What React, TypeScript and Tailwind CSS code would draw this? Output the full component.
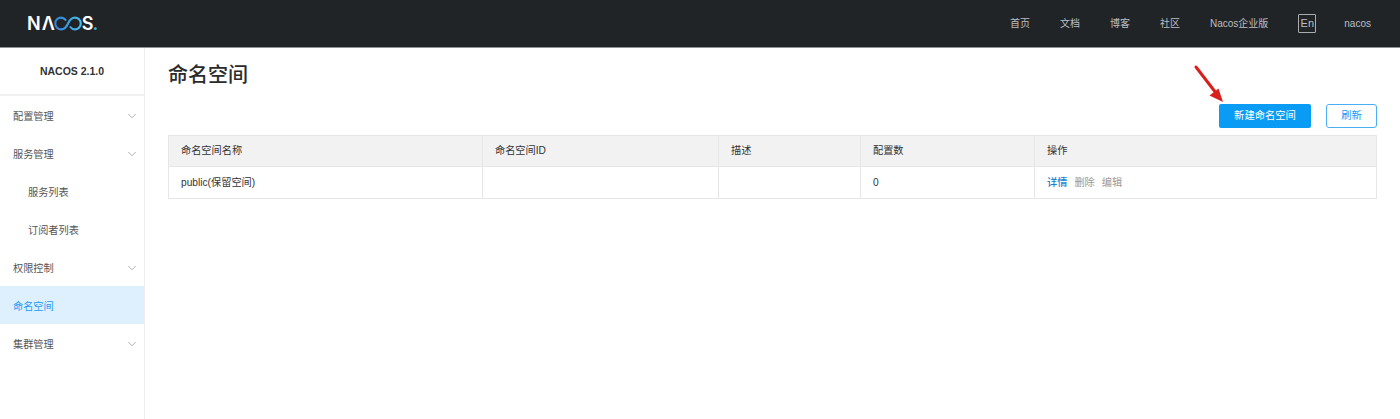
import { ChevronDown } from "lucide-react";

const menu = [
  { label: "配置管理", arrow: true },
  { label: "服务管理", arrow: true },
  { label: "服务列表", sub: true },
  { label: "订阅者列表", sub: true },
  { label: "权限控制", arrow: true },
  { label: "命名空间", active: true },
  { label: "集群管理", arrow: true },
];

function Logo() {
  return (
    <div
      className="flex items-center text-[18px] font-semibold leading-none text-white"
      style={{ fontFamily: "Inter, sans-serif" }}
    >
      <span>N</span>
      <span className="ml-[1px]">Λ</span>
      <svg width="28" height="15" viewBox="0 0 29 15" fill="none" className="-ml-[1px]">
        <defs>
          <linearGradient id="loop" x1="0" y1="0" x2="29" y2="0" gradientUnits="userSpaceOnUse">
            <stop offset="0" stopColor="#2f7fd8" />
            <stop offset="1" stopColor="#47c1e8" />
          </linearGradient>
        </defs>
        <path
          d="M12 3.8C10.8 2.4 9.2 1.4 7.4 1.4 4 1.4 1.3 4.1 1.3 7.5S4 13.6 7.4 13.6C11.4 13.6 13.4 10 14.5 7.5 15.6 5 17.6 1.4 21.6 1.4 25 1.4 27.7 4.1 27.7 7.5S25 13.6 21.6 13.6C19.8 13.6 18.2 12.6 17 11.2"
          stroke="url(#loop)"
          strokeWidth="2.2"
          strokeLinecap="round"
        />
      </svg>
      <span>S</span>
      <span className="-ml-[1px] text-[#35b8e0]">.</span>
    </div>
  );
}

function Header() {
  return (
    <header className="flex h-[48px] items-center justify-between border-b border-[#8f9194] bg-[#212427] pl-[27px] pr-[29px]">
      <Logo />
      <nav className="flex items-center gap-[30px] text-[10px] text-[#bdbec0]">
        <a>首页</a>
        <a>文档</a>
        <a>博客</a>
        <a>社区</a>
        <a>Nacos企业版</a>
        <span className="-mr-[2px] flex h-[19px] w-[18px] items-center justify-center rounded-[1px] border border-[#a9abad] text-[11px] leading-none">
          En
        </span>
        <a>nacos</a>
      </nav>
    </header>
  );
}

function Sidebar() {
  return (
    <aside className="w-[145px] shrink-0 self-stretch border-r border-[#eeeeee]">
      <div className="flex h-[48px] items-center justify-center border-b-2 border-[#f2f2f2] pt-[1px] text-[10.5px] font-bold text-[#333333]">
        NACOS 2.1.0
      </div>
      {menu.map((item) => (
        <div
          key={item.label}
          className={`flex h-[38px] items-center justify-between pr-[5px] text-[10.2px] ${
            item.active ? "bg-[#def0fd] text-[#209bfa]" : "text-[#555555]"
          } ${item.sub ? "pl-[28px]" : "pl-[13px]"}`}
        >
          <span className="pt-[3px]">{item.label}</span>
          {item.arrow && <ChevronDown size={14} strokeWidth={1} className="mt-[1px] text-[#777777]" />}
        </div>
      ))}
    </aside>
  );
}

function NamespaceTable() {
  return (
    <table className="w-full table-fixed border-collapse border border-[#e6e6e6] text-[10.2px] text-[#333333]">
      <colgroup>
        <col className="w-[314px]" />
        <col className="w-[236px]" />
        <col className="w-[142px]" />
        <col className="w-[174px]" />
        <col />
      </colgroup>
      <thead>
        <tr className="h-[31px] bg-[#f2f2f2] text-left">
          {["命名空间名称", "命名空间ID", "描述", "配置数", "操作"].map((h) => (
            <th key={h} className="border-x border-[#e6e6e6] px-[12px] font-normal">
              {h}
            </th>
          ))}
        </tr>
      </thead>
      <tbody>
        <tr className="h-[32px] border-t border-[#e6e6e6]">
          <td className="border-x border-[#e6e6e6] px-[12px]">public(保留空间)</td>
          <td className="border-x border-[#e6e6e6] px-[12px]"></td>
          <td className="border-x border-[#e6e6e6] px-[12px]"></td>
          <td className="border-x border-[#e6e6e6] px-[12px]">0</td>
          <td className="border-x border-[#e6e6e6] px-[12px]">
            <span className="mr-[7px] font-medium text-[#1f7fd0]">详情</span>
            <span className="mr-[7px] text-[#999999]">删除</span>
            <span className="text-[#999999]">编辑</span>
          </td>
        </tr>
      </tbody>
    </table>
  );
}

export default function App() {
  return (
    <div
      className="flex h-[419px] w-[1400px] flex-col overflow-hidden bg-white"
      style={{ fontFamily: '"Liberation Sans", "Noto Sans CJK SC", sans-serif' }}
    >
      <Header />
      <div className="flex flex-1">
        <Sidebar />
        <main className="min-w-0 flex-1 px-[23px]">
          <h1 className="pt-[13px] text-[20px] font-medium leading-[28px] text-[#2b2b2b]">命名空间</h1>
          <div className="relative mt-[15px] flex justify-end gap-[15px]">
            {/* red annotation arrow */}
            <svg width="40" height="48" viewBox="0 0 40 48" fill="none" className="absolute right-[147px] -top-[44px]">
              <path d="M6 7 L26 33" stroke="#d8201d" strokeWidth="3" strokeLinecap="round" />
              <path d="M19.5 35.5 L28.5 28.5 L33 42 Z" fill="#d8201d" />
            </svg>
            <button className="h-[24px] w-[92px] rounded-[2px] bg-[#0a9bf5] text-[10.3px] text-white">新建命名空间</button>
            <button className="h-[24px] w-[51px] rounded-[3px] border border-[#4aaef5] text-[10.3px] text-[#209bfa]">刷新</button>
          </div>
          <div className="mt-[7px]">
            <NamespaceTable />
          </div>
        </main>
      </div>
    </div>
  );
}
